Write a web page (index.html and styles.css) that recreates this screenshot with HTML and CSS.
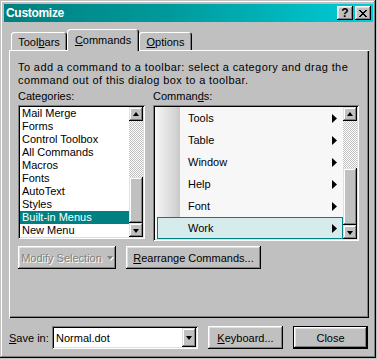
FILE: index.html
```html
<!DOCTYPE html>
<html lang="en">
<head>
  <meta charset="UTF-8" />
  <title>Customize</title>
  <link rel="stylesheet" href="styles.css">
</head>
<body>
  <div class="window">
    <div class="titlebar">
      <span class="title">Customize</span>
      <div class="caption-btns">
        <div class="cap-btn help">?</div>
        <div class="cap-btn">
          <svg width="8" height="7" viewBox="0 0 8 7"><path d="M0 0h2v1h-2zM6 0h2v1h-2zM1 1h2v1h-2zM5 1h2v1h-2zM2 2h4v1h-4zM3 3h2v1h-2zM2 4h4v1h-4zM1 5h2v1h-2zM5 5h2v1h-2zM0 6h2v1h-2zM6 6h2v1h-2z" fill="#000"/></svg>
        </div>
      </div>
    </div>

    <div class="dialog">
      <div class="tabs">
        <div class="tab tab-toolbars">Tool<u>b</u>ars</div>
        <div class="tab tab-commands active"><u>C</u>ommands</div>
        <div class="tab tab-options"><u>O</u>ptions</div>
      </div>

      <div class="panel">
        <p class="hint">To add a command to a toolbar: select a category and drag the<br>command out of this dialog box to a toolbar.</p>

        <div class="columns">
          <div class="col col-left">
            <div class="label">Categories:</div>
            <div class="listbox cats">
              <ul class="items">
                <li>Mail Merge</li>
                <li>Forms</li>
                <li>Control Toolbox</li>
                <li>All Commands</li>
                <li>Macros</li>
                <li>Fonts</li>
                <li>AutoText</li>
                <li>Styles</li>
                <li class="selected">Built-in Menus</li>
                <li>New Menu</li>
              </ul>
              <div class="scrollbar">
                <div class="sb-btn"><span class="tri-up"></span></div>
                <div class="sb-fill"></div>
                <div class="sb-thumb"></div>
                <div class="sb-btn"><span class="tri-down"></span></div>
              </div>
            </div>
          </div>

          <div class="col col-right">
            <div class="label">Comman<u>d</u>s:</div>
            <div class="listbox cmds">
              <ul class="cmd-items">
                <li class="cmd"><span>Tools</span><svg width="5" height="9" viewBox="0 0 5 9"><path d="M0 0L5 4.5L0 9z" fill="#000"/></svg></li>
                <li class="cmd"><span>Table</span><svg width="5" height="9" viewBox="0 0 5 9"><path d="M0 0L5 4.5L0 9z" fill="#000"/></svg></li>
                <li class="cmd"><span>Window</span><svg width="5" height="9" viewBox="0 0 5 9"><path d="M0 0L5 4.5L0 9z" fill="#000"/></svg></li>
                <li class="cmd"><span>Help</span><svg width="5" height="9" viewBox="0 0 5 9"><path d="M0 0L5 4.5L0 9z" fill="#000"/></svg></li>
                <li class="cmd"><span>Font</span><svg width="5" height="9" viewBox="0 0 5 9"><path d="M0 0L5 4.5L0 9z" fill="#000"/></svg></li>
                <li class="cmd current"><span>Work</span><svg width="5" height="9" viewBox="0 0 5 9"><path d="M0 0L5 4.5L0 9z" fill="#000"/></svg></li>
              </ul>
              <div class="scrollbar">
                <div class="sb-btn"><span class="tri-up"></span></div>
                <div class="sb-fill"></div>
                <div class="sb-thumb"></div>
                <div class="sb-btn"><span class="tri-down"></span></div>
              </div>
            </div>
          </div>
        </div>

        <div class="actions">
          <div class="btn btn-modify disabled">Modify Selection <span class="tri-down grey"></span></div>
          <div class="btn btn-rearrange"><u>R</u>earrange Commands...</div>
        </div>
      </div>

      <div class="footer">
        <span class="save-label"><u>S</u>ave in:</span>
        <div class="combo">
          <span class="combo-text">Normal.dot</span>
          <div class="sb-btn combo-btn"><span class="tri-down"></span></div>
        </div>
        <div class="btn btn-keyboard"><u>K</u>eyboard...</div>
        <div class="btn btn-close default">Close</div>
      </div>
    </div>
  </div>
</body>
</html>
```

FILE: styles.css
```css
* {
  box-sizing: border-box;
}

body {
  margin: 0;
  background: #c0c0c0;
  font-family: 'Liberation Sans', Arial, sans-serif;
  font-size: 11px;
  color: #000;
}

u {
  text-decoration: underline;
  text-underline-offset: 1px;
}

/* window frame */
.window {
  width: 376px;
  height: 358px;
  padding: 4px 3px 4px 4px;
  background: #c0c0c0;
  box-shadow: inset -1px -1px #000, inset 1px 1px #c0c0c0, inset -2px -2px #808080, inset 2px 2px #fff;
}

.titlebar {
  height: 18px;
  display: flex;
  align-items: center;
  padding: 0 2px;
  background: linear-gradient(to right, #008080, #009a9c 45%, #00cdd8);
}

.title {
  color: #fff;
  font-weight: bold;
  font-size: 12px;
  letter-spacing: -0.3px;
}

.caption-btns {
  margin-left: auto;
  display: flex;
  gap: 2px;
}

.cap-btn {
  width: 16px;
  height: 14px;
  display: flex;
  align-items: center;
  justify-content: center;
  background: #c0c0c0;
  box-shadow: inset -1px -1px #000, inset 1px 1px #fff, inset -2px -2px #808080, inset 2px 2px #dfdfdf;
}

.cap-btn.help {
  font-weight: bold;
  font-size: 12px;
  line-height: 14px;
  padding-bottom: 1px;
}

.dialog {
  padding: 7px 1px 0 5px;
}

/* tabs */
.tabs {
  display: flex;
  align-items: flex-end;
  height: 21px;
  padding-left: 2px;
}

.tab {
  height: 18px;
  display: flex;
  align-items: center;
  justify-content: center;
  padding-top: 1px;
  background: #c0c0c0;
  border-radius: 3px 3px 0 0;
  box-shadow: inset 1px 1px #fff, inset -1px 0 #000, inset -2px 0 #808080;
}

.tab-toolbars { width: 56px; }
.tab-commands { width: 72px; }
.tab-options { width: 53px; }

.tab.active {
  height: 22px;
  margin-bottom: -1px;
  padding-top: 0;
  padding-bottom: 1px;
  position: relative;
  z-index: 1;
}

.panel {
  width: 360px;
  height: 268px;
  padding: 11px 9px 0 9px;
  box-shadow: inset 1px 1px #fff, inset -1px -1px #000, inset -2px -2px #808080;
}

.hint {
  margin: 0;
  line-height: 13px;
  letter-spacing: 0.4px;
  white-space: nowrap;
}

.columns {
  display: flex;
  gap: 8px;
  margin-top: 3px;
}

.label {
  line-height: 13px;
  height: 15px;
}

.col-left { width: 127px; }
.col-right { width: 206px; }

/* list boxes */
.listbox {
  display: flex;
  padding: 2px;
  background: #fff;
  box-shadow: inset 1px 1px #808080, inset -1px -1px #fff, inset 2px 2px #000, inset -2px -2px #dfdfdf;
}

.cats { height: 134px; }
.cmds { height: 136px; }

.items, .cmd-items {
  list-style: none;
  margin: 0;
  padding: 0;
  flex: 1;
}

.items li {
  height: 13px;
  line-height: 13px;
  padding-left: 2px;
  white-space: nowrap;
}

.items li.selected {
  background: #008080;
  color: #fff;
}

.cmd-items {
  background: #f7f7f7;
  padding-left: 2px;
}

.cmd {
  height: 22px;
  display: flex;
  align-items: center;
  padding-left: 31px;
  padding-right: 6px;
  background: linear-gradient(to right, #f2f2f2, #d9d9d9 16px, #c9c9c9 23px, #f7f7f7 23px);
}

.cmd span {
  flex: 1;
}

.cmd.current {
  background: #d6ebeb;
  border: 1px solid #008080;
  padding-left: 30px;
  padding-right: 5px;
}

/* scrollbars */
.scrollbar {
  width: 14px;
  display: flex;
  flex-direction: column;
}

.sb-btn {
  width: 14px;
  height: 14px;
  flex: none;
  display: flex;
  align-items: center;
  justify-content: center;
  background: #c0c0c0;
  box-shadow: inset -1px -1px #000, inset 1px 1px #dfdfdf, inset -2px -2px #808080, inset 2px 2px #fff;
}

.sb-fill {
  flex: 1;
  background: repeating-conic-gradient(#fff 0 25%, #c0c0c0 0 50%) 0 0 / 2px 2px;
}

.sb-thumb {
  flex: none;
  background: #c0c0c0;
  box-shadow: inset -1px -1px #000, inset 1px 1px #dfdfdf, inset -2px -2px #808080, inset 2px 2px #fff;
}

.cats .sb-thumb { height: 46px; }
.cmds .sb-thumb { height: 57px; }

.tri-up, .tri-down {
  width: 0;
  height: 0;
  border-left: 3.5px solid transparent;
  border-right: 3.5px solid transparent;
}

.tri-up { border-bottom: 4px solid #000; margin-top: -1px; }
.tri-down { border-top: 4px solid #000; margin-top: 1px; }

.tri-down.grey {
  border-top-color: #808080;
  margin-left: 5px;
  filter: drop-shadow(1px 1px 0 #fff);
}

/* buttons */
.actions {
  display: flex;
  gap: 10px;
  margin-top: 5px;
}

.btn {
  height: 23px;
  display: flex;
  align-items: center;
  justify-content: center;
  background: #c0c0c0;
  box-shadow: inset -1px -1px #000, inset 1px 1px #fff, inset -2px -2px #808080, inset 2px 2px #dfdfdf;
  white-space: nowrap;
}

.btn.disabled {
  color: #808080;
  text-shadow: 1px 1px 0 #fff;
}

.btn-modify { width: 98px; }
.btn-rearrange { width: 135px; }
.btn-keyboard { width: 75px; }
.btn-close { width: 75px; }

.btn.default {
  box-shadow: inset 0 0 0 1px #000, inset -2px -2px #000, inset 2px 2px #fff, inset -3px -3px #808080, inset 3px 3px #dfdfdf;
}

/* footer */
.footer {
  display: flex;
  align-items: center;
  margin-top: 8px;
  height: 23px;
}

.save-label {
  width: 43px;
}

.combo {
  width: 146px;
  height: 23px;
  display: flex;
  align-items: center;
  padding: 2px;
  margin-right: 10px;
  background: #fff;
  box-shadow: inset 1px 1px #808080, inset -1px -1px #fff, inset 2px 2px #000, inset -2px -2px #dfdfdf;
}

.combo-text {
  flex: 1;
  padding-left: 2px;
}

.combo-btn {
  height: 19px;
}

.btn-keyboard {
  margin-right: 10px;
}
```
